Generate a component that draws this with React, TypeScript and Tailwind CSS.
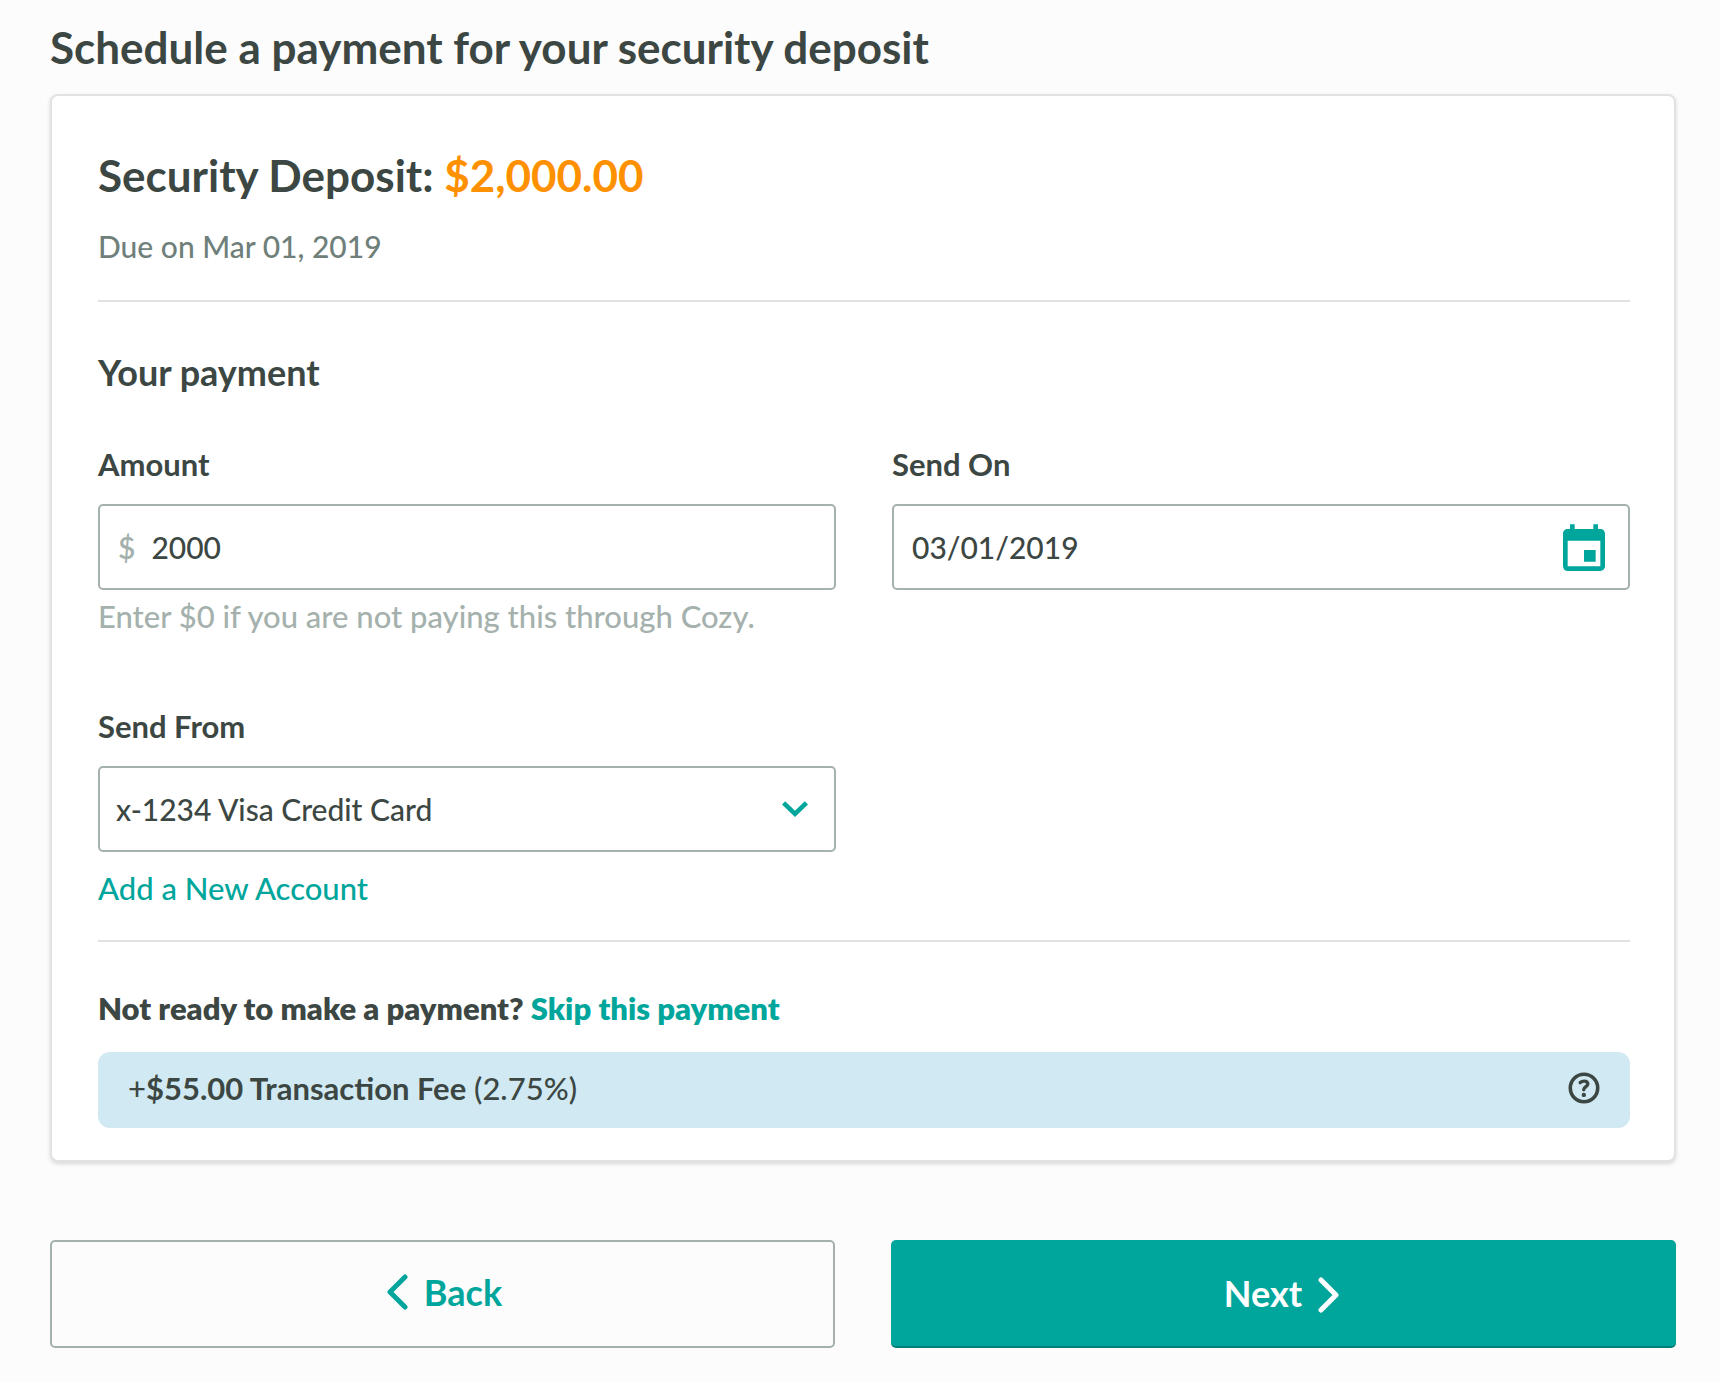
import { useState, type FormEvent, type ReactNode } from "react";
import { MdEvent } from "react-icons/md";

const accounts = [{ id: "1234", label: "x-1234 Visa Credit Card" }];

const fieldStyles =
  "flex h-[86px] w-full items-center rounded-[5px] border-2 border-[#a5b1ad] bg-white text-[30px]";

interface FieldProps {
  id: string;
  label: string;
  hint?: string;
  children: ReactNode;
}

function Field({ id, label, hint, children }: FieldProps) {
  return (
    <div>
      <label htmlFor={id} className="mb-5 block font-bold">
        {label}
      </label>
      {children}
      {hint && <p className="mt-1.5 text-[#a5b1ad]">{hint}</p>}
    </div>
  );
}

function ChevronDown() {
  return (
    <svg
      viewBox="0 0 26 16"
      className="pointer-events-none absolute right-7 h-4 w-[26px] text-[#00a69c]"
      fill="none"
      stroke="currentColor"
      strokeWidth="4.6"
      aria-hidden="true"
    >
      <path d="M1.6 1.8 13 12.8 24.4 1.8" />
    </svg>
  );
}

function ChevronLeft() {
  return (
    <svg
      viewBox="0 0 21 36"
      className="h-9 w-[21px]"
      fill="none"
      stroke="currentColor"
      strokeWidth="5"
      strokeLinecap="round"
      strokeLinejoin="round"
      aria-hidden="true"
    >
      <path d="M18 3 3 18l15 15" />
    </svg>
  );
}

function ChevronRight() {
  return (
    <svg
      viewBox="0 0 21 36"
      className="mt-1 h-9 w-[21px]"
      fill="none"
      stroke="currentColor"
      strokeWidth="5"
      strokeLinecap="round"
      strokeLinejoin="round"
      aria-hidden="true"
    >
      <path d="m3 3 15 15L3 33" />
    </svg>
  );
}

function HelpIcon() {
  return (
    <svg viewBox="0 0 32 32" className="size-8" fill="none" stroke="currentColor" aria-hidden="true">
      <circle cx="16" cy="16" r="13.7" strokeWidth="3.6" />
      <path
        d="M12.2 10.6c1.2-1.1 2.5-1.5 3.9-1.5 2.1 0 3.7 1 3.7 3 0 2.8-4.1 2.6-4.1 5.7"
        strokeWidth="3.4"
        strokeLinecap="round"
      />
      <circle cx="15.8" cy="22.9" r="2.2" fill="currentColor" stroke="none" />
    </svg>
  );
}

export default function App() {
  const [amount, setAmount] = useState("2000");
  const [sendOn, setSendOn] = useState("03/01/2019");
  const [account, setAccount] = useState(accounts[0].id);

  const handleSubmit = (e: FormEvent) => {
    e.preventDefault();
  };

  return (
    <main className="min-h-screen bg-[#fcfcfc] pt-5 pr-11 pb-8 pl-[50px] font-['Lato',sans-serif] text-[31px] leading-10 font-medium text-[#3c4743]">
      <h1 className="mb-5 text-[44px] leading-[54px] font-bold">
        Schedule a payment for your security deposit
      </h1>

      <form onSubmit={handleSubmit}>
        <div className="rounded-lg border-2 border-[#e2e2e2] bg-white pt-13 pr-11 pb-8 pl-[46px] shadow-[0_2px_4px_rgba(0,0,0,0.14)]">
          {/* Summary */}
          <h2 className="text-[44px] leading-[54px] font-bold">
            Security Deposit: <span className="text-[#ff9100]">$2,000.00</span>
          </h2>
          <p className="mt-6 text-[30px] text-[#6f7f7a]">Due on Mar 01, 2019</p>

          <hr className="mt-[34px] border-t-2 border-[#e2e2e2]" />

          {/* Payment details */}
          <h3 className="mt-12 text-[36px] leading-11 font-bold">Your payment</h3>

          <div className="mt-[50px] grid grid-cols-2 gap-x-14 gap-y-[70px]">
            <Field id="amount" label="Amount" hint="Enter $0 if you are not paying this through Cozy.">
              <div className={fieldStyles}>
                <span className="pl-[18px] font-semibold text-[#a5b1ad]">$</span>
                <input
                  id="amount"
                  type="text"
                  inputMode="numeric"
                  value={amount}
                  onChange={(e) => setAmount(e.target.value)}
                  className="h-full min-w-0 flex-1 bg-transparent pr-4 pl-4 outline-none"
                />
              </div>
            </Field>

            <Field id="send-on" label="Send On">
              <div className={fieldStyles}>
                <input
                  id="send-on"
                  type="text"
                  value={sendOn}
                  onChange={(e) => setSendOn(e.target.value)}
                  className="h-full min-w-0 flex-1 bg-transparent pl-[18px] outline-none"
                />
                <button type="button" aria-label="Open calendar" className="mr-4 pt-1.5 text-[#00a69c]">
                  <MdEvent className="size-14" />
                </button>
              </div>
            </Field>

            <Field id="send-from" label="Send From">
              <div className="relative flex items-center">
                <select
                  id="send-from"
                  value={account}
                  onChange={(e) => setAccount(e.target.value)}
                  className="h-[86px] w-full appearance-none rounded-[5px] border-2 border-[#a5b1ad] bg-white pr-16 pl-4 text-[30px] outline-none"
                >
                  {accounts.map(({ id, label }) => (
                    <option key={id} value={id}>
                      {label}
                    </option>
                  ))}
                </select>
                <ChevronDown />
              </div>
            </Field>
          </div>

          <a href="#new-account" className="mt-4 inline-block align-top text-[#00a69c]">
            Add a New Account
          </a>

          <hr className="mt-8 border-t-2 border-[#e2e2e2]" />

          <p className="mt-[46px] font-extrabold">
            Not ready to make a payment?{" "}
            <a href="#skip" className="text-[#00a69c]">
              Skip this payment
            </a>
          </p>

          {/* Transaction fee */}
          <div className="mt-6 flex h-[76px] items-center justify-between rounded-xl bg-[#d0e9f2] px-7.5 pb-1">
            <p>
              +<span className="font-bold">$55.00 Transaction Fee</span> (2.75%)
            </p>
            <button type="button" aria-label="About this fee">
              <HelpIcon />
            </button>
          </div>
        </div>

        {/* Actions */}
        <div className="mt-[78px] grid grid-cols-2 gap-14 text-[36px] font-bold">
          <button
            type="button"
            className="flex h-27 items-center justify-center gap-4 rounded-[5px] border-2 border-[#a5b1ad] pb-1 pl-1 text-[#00a69c]"
          >
            <ChevronLeft />
            Back
          </button>
          <button
            type="submit"
            className="flex h-27 items-center justify-center gap-4 rounded-[5px] border-b-2 border-[#007f7a] bg-[#00a69c] pr-1 text-white"
          >
            Next
            <ChevronRight />
          </button>
        </div>
      </form>
    </main>
  );
}
